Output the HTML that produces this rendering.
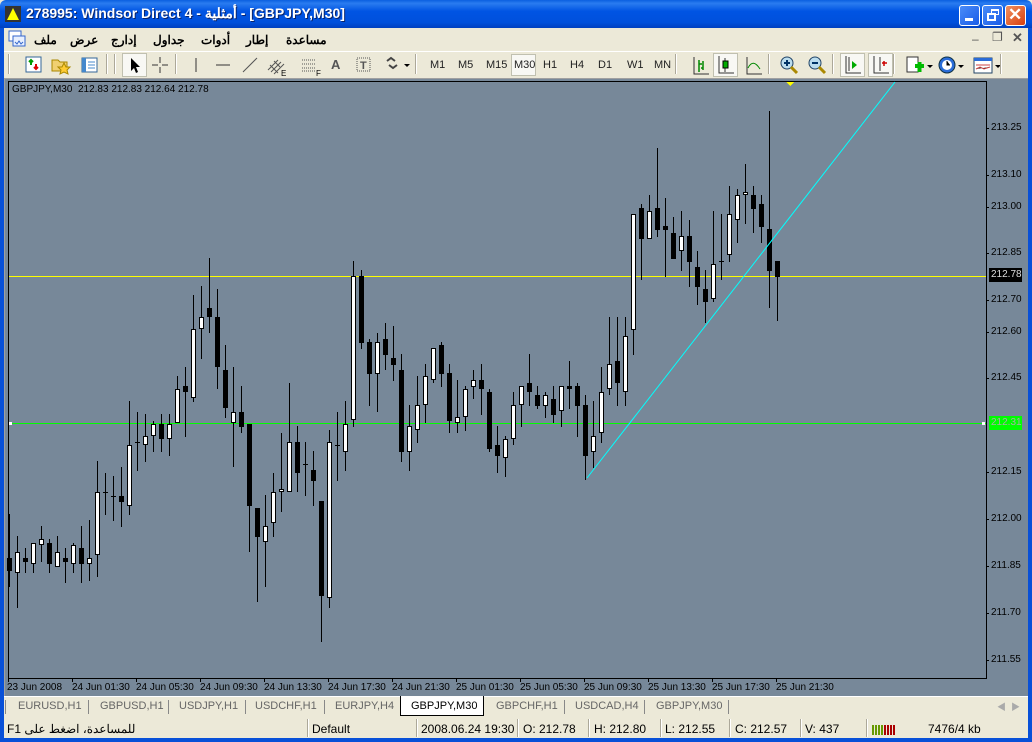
<!DOCTYPE html>
<html><head><meta charset="utf-8">
<style>
*{margin:0;padding:0;box-sizing:border-box}
body{width:1032px;height:742px;overflow:hidden;background:#ece9d8;font-family:"Liberation Sans","Noto Sans CJK SC",sans-serif;font-size:11px;color:#000;position:relative}
.abs{position:absolute}
#title{left:0;top:0;width:1032px;height:28px;background:linear-gradient(#0a5fe0 0%,#2a7cf0 12%,#0054e3 40%,#0050dc 80%,#0040c0 100%);border-radius:6px 6px 0 0}
#title .t{left:26px;top:5px;color:#fff;font-weight:bold;font-size:14px;text-shadow:1px 1px #0a246a;white-space:nowrap}
.wb{top:5px;width:21px;height:21px;border:1px solid #fff;border-radius:3px;background:linear-gradient(135deg,#4a8cf8,#1a5ce8)}
#lframe{left:0;top:28px;width:4px;height:714px;background:#0850d8}
#rframe{right:0;top:28px;width:4px;height:714px;background:#0850d8}
#bframe{left:0;top:738px;width:1032px;height:4px;background:#0850d8}
#menu{left:4px;top:28px;width:1024px;height:22px}
.m{top:5px;font-size:12px;font-weight:bold}
#tb{left:4px;top:51px;width:1024px;height:27px;border-top:1px solid #fff}
.tf{top:7px;font-size:11px;color:#222}
.sep{width:2px;height:20px;border-left:1px solid #aca899;border-right:1px solid #fff;top:54px}
#chart{left:4px;top:78px;width:1024px;height:618px;background:#778899;border-top:1px solid #a0a0a0;border-left:1px solid #a0a0a0}
.pl{left:991px;font-size:10px;font-family:"Liberation Sans",sans-serif;color:#000}
.dl{top:682px;font-size:10px;font-family:"Liberation Sans",sans-serif;white-space:nowrap}
#tabs{left:4px;top:696px;width:1024px;height:21px;background:#ece9d8;border-top:1px solid #fff}
.tab{top:700px;color:#666;font-size:11px;white-space:nowrap}
.ts{top:700px;width:1px;height:14px;background:#888}
#status{left:4px;top:718px;width:1024px;height:20px;background:#ece9d8}
.st{top:722px;font-size:12px;white-space:nowrap}
.ss{top:719px;width:2px;height:18px;border-left:1px solid #aca899;border-right:1px solid #fff}
</style></head><body>
<div id="title" class="abs">
 <svg class="abs" style="left:5px;top:6px" width="16" height="16"><rect width="16" height="16" fill="#333"/><polygon points="8,2 14,14 2,14" fill="#ff0"/></svg>
 <div class="abs t">278995: Windsor Direct 4 - أمثلية - [GBPJPY,M30]</div>
 <div class="abs wb" style="left:959px"><div class="abs" style="left:5px;top:12px;width:8px;height:3px;background:#fff"></div></div>
 <div class="abs wb" style="left:982px"><div class="abs" style="left:4px;top:7px;width:9px;height:8px;border:2px solid #fff"></div><div class="abs" style="left:8px;top:3px;width:8px;height:6px;border:1px solid #fff;border-top-width:2px"></div></div>
 <div class="abs wb" style="left:1005px;background:linear-gradient(135deg,#f09060,#d84010)"><div class="abs" style="left:2px;top:-1px;color:#fff;font-size:17px;font-weight:bold">✕</div></div>
</div>
<div id="lframe" class="abs"></div><div id="rframe" class="abs"></div>
<div id="menu" class="abs">
 <svg class="abs" style="left:4px;top:2px" width="18" height="18"><rect x="1" y="1" width="12" height="10" fill="#fff" stroke="#36c"/><rect x="5" y="6" width="12" height="10" fill="#e8f0ff" stroke="#36c"/><path d="M7 12l2 2 2-3 2 3 2-2" stroke="#36c" fill="none"/></svg>
 <div class="abs m" style="left:30px">ملف</div>
 <div class="abs m" style="left:66px">عرض</div>
 <div class="abs m" style="left:107px">إدارج</div>
 <div class="abs m" style="left:149px">جداول</div>
 <div class="abs m" style="left:197px">أدوات</div>
 <div class="abs m" style="left:242px">إطار</div>
 <div class="abs m" style="left:282px">مساعدة</div>
 <div class="abs" style="left:968px;top:4px;font-size:12px;color:#555">–</div>
 <div class="abs" style="left:988px;top:2px;font-size:12px;color:#555">❐</div>
 <div class="abs" style="left:1008px;top:2px;font-size:13px;color:#555;font-weight:bold">✕</div>
</div>
<div id="tb" class="abs">
 <svg class="abs" style="left:20px;top:3px" width="20" height="20"><rect x="2" y="2" width="15" height="15" fill="#fff" stroke="#369"/><path d="M7 5v5M5 7l2-2 2 2" stroke="#090" stroke-width="2" fill="none"/><path d="M12 9v5M10 12l2 2 2-2" stroke="#d00" stroke-width="2" fill="none"/></svg>
 <svg class="abs" style="left:46px;top:3px" width="22" height="20"><path d="M2 5h6l2 2h7v9H2z" fill="#f0d070" stroke="#a80"/><polygon points="14,8 16,12 20,12 17,15 18,19 14,17 10,19 11,15 8,12 12,12" fill="#fc3" stroke="#a80"/></svg>
 <svg class="abs" style="left:76px;top:3px" width="20" height="20"><rect x="2" y="3" width="15" height="14" fill="#fff" stroke="#369"/><rect x="2" y="3" width="4" height="14" fill="#48c"/><path d="M8 7h7M8 10h7M8 13h7" stroke="#48c"/></svg>
 <div class="abs" style="left:118px;top:1px;width:25px;height:24px;background:#f8f8f4;border:1px solid #c0c0b0"></div>
 <svg class="abs" style="left:122px;top:4px" width="18" height="18"><path d="M5 2v13l3-3 2 5 2-1-2-5h4z" fill="#000"/></svg>
 <svg class="abs" style="left:147px;top:4px" width="18" height="18"><path d="M9 1v6M9 11v6M1 9h6M11 9h6" stroke="#333"/></svg>
 <svg class="abs" style="left:183px;top:4px" width="18" height="18"><path d="M9 2v14" stroke="#333"/></svg>
 <svg class="abs" style="left:210px;top:4px" width="18" height="18"><path d="M2 9h14" stroke="#333"/></svg>
 <svg class="abs" style="left:237px;top:4px" width="18" height="18"><path d="M2 16L16 2" stroke="#555"/></svg>
 <svg class="abs" style="left:262px;top:4px" width="22" height="20"><path d="M2 14L12 4M5 16L15 6M8 18L18 8M4 9l8 8M8 5l6 6" stroke="#555"/><text x="15" y="20" font-size="8" font-family="Liberation Sans">E</text></svg>
 <svg class="abs" style="left:296px;top:4px" width="22" height="20"><path d="M2 4h14M2 8h14M2 12h14M2 15h14" stroke="#555" stroke-dasharray="1 1"/><text x="16" y="20" font-size="8" font-family="Liberation Sans">F</text></svg>
 <div class="abs" style="left:327px;top:5px;font-size:13px;font-weight:bold;color:#555">A</div>
 <svg class="abs" style="left:351px;top:4px" width="18" height="18"><rect x="2" y="2" width="13" height="13" fill="none" stroke="#555" stroke-dasharray="1 1"/><text x="5" y="13" font-size="11" font-weight="bold" fill="#555" font-family="Liberation Sans">T</text></svg>
 <svg class="abs" style="left:380px;top:4px" width="28" height="18"><path d="M3 5l4-3 4 3M5 9l4 3 4-3" stroke="#444" stroke-width="2" fill="none"/><path d="M20 8h6l-3 3z" fill="#000"/></svg>
 <div class="abs tf" style="left:426px">M1</div>
 <div class="abs tf" style="left:454px">M5</div>
 <div class="abs tf" style="left:482px">M15</div>
 <div class="abs" style="left:507px;top:2px;width:25px;height:22px;background:#f8f8f4;border:1px solid #c0c0b0"></div>
 <div class="abs tf" style="left:510px">M30</div>
 <div class="abs tf" style="left:539px">H1</div>
 <div class="abs tf" style="left:566px">H4</div>
 <div class="abs tf" style="left:594px">D1</div>
 <div class="abs tf" style="left:623px">W1</div>
 <div class="abs tf" style="left:650px">MN</div>
 <svg class="abs" style="left:686px;top:4px" width="20" height="20"><path d="M4 1v17h15M4 18" stroke="#333" fill="none"/><path d="M9 4v12M9 8h3M13 5v9M11 12h2" stroke="#080" stroke-width="1.5"/></svg>
 <div class="abs" style="left:709px;top:1px;width:25px;height:24px;background:#f8f8f4;border:1px solid #c0c0b0"></div>
 <svg class="abs" style="left:712px;top:3px" width="20" height="20"><path d="M3 1v17h15" stroke="#333" fill="none"/><path d="M9 3v14" stroke="#333"/><rect x="7" y="6" width="5" height="7" fill="#0a0" stroke="#000"/></svg>
 <svg class="abs" style="left:739px;top:4px" width="20" height="20"><path d="M4 1v17h15" stroke="#333" fill="none"/><path d="M5 12Q10 2 17 13" stroke="#080" fill="none"/></svg>
 <svg class="abs" style="left:775px;top:3px" width="22" height="22"><circle cx="8" cy="8" r="6" fill="#bde" stroke="#246"/><path d="M5 8h6M8 5v6" stroke="#036" stroke-width="2"/><path d="M12 12l6 6" stroke="#a80" stroke-width="3"/></svg>
 <svg class="abs" style="left:803px;top:3px" width="22" height="22"><circle cx="8" cy="8" r="6" fill="#bde" stroke="#246"/><path d="M5 8h6" stroke="#036" stroke-width="2"/><path d="M12 12l6 6" stroke="#a80" stroke-width="3"/></svg>
 <div class="abs" style="left:836px;top:1px;width:25px;height:24px;background:#f8f8f4;border:1px solid #c0c0b0"></div>
 <svg class="abs" style="left:839px;top:3px" width="20" height="20"><path d="M3 1v17h15" stroke="#333" fill="none"/><path d="M6 2v14" stroke="#333"/><path d="M9 6l5 4-5 4z" fill="#0a0"/></svg>
 <div class="abs" style="left:864px;top:1px;width:25px;height:24px;background:#f8f8f4;border:1px solid #c0c0b0"></div>
 <svg class="abs" style="left:867px;top:3px" width="20" height="20"><path d="M3 1v17h15" stroke="#333" fill="none"/><path d="M9 2v14" stroke="#333"/><path d="M11 8h5M13 6v5" stroke="#c00" stroke-width="1.5"/></svg>
 <svg class="abs" style="left:901px;top:3px" width="30" height="22"><rect x="2" y="2" width="11" height="15" fill="#fff" stroke="#333"/><path d="M10 11h9M14.5 7v10" stroke="#0b0" stroke-width="4"/><path d="M22 10h6l-3 3z" fill="#000"/></svg>
 <svg class="abs" style="left:933px;top:3px" width="30" height="22"><circle cx="10" cy="10" r="8" fill="#2a6cd8" stroke="#134"/><circle cx="10" cy="10" r="5" fill="#fff"/><path d="M10 6v4h3" stroke="#000"/><path d="M21 10h6l-3 3z" fill="#000"/></svg>
 <svg class="abs" style="left:968px;top:3px" width="30" height="22"><rect x="2" y="3" width="18" height="15" fill="#fff" stroke="#246"/><rect x="2" y="3" width="18" height="3" fill="#2a6cd8"/><path d="M4 10h14M4 14l4-2 4 2 6-2" stroke="#c44"/><path d="M23 10h6l-3 3z" fill="#000"/></svg>
</div>
<div class="abs sep" style="left:8px"></div><div class="abs sep" style="left:106px"></div><div class="abs sep" style="left:114px"></div><div class="abs sep" style="left:175px"></div><div class="abs sep" style="left:415px"></div><div class="abs sep" style="left:675px"></div><div class="abs sep" style="left:768px"></div><div class="abs sep" style="left:832px"></div><div class="abs sep" style="left:893px"></div><div class="abs sep" style="left:1000px"></div>

<div id="chart" class="abs"></div>
<svg class="abs" style="left:0;top:0" width="1032" height="742" shape-rendering="crispEdges" id="cs">
 <rect x="8.5" y="81.5" width="978" height="597" fill="none" stroke="#000"/>
 <line x1="9" y1="276.5" x2="986" y2="276.5" stroke="#ff0"/>
 <line x1="9" y1="423.5" x2="986" y2="423.5" stroke="#0f0"/>
 <rect x="9" y="422" width="3" height="3" fill="#fff"/>
 <rect x="982" y="422" width="3" height="3" fill="#fff"/>
 <polygon points="786,82 794,82 790,86" fill="#ff0"/>
 <g id="candles"></g>
 <line x1="587" y1="478" x2="895" y2="82" stroke="#0ff" shape-rendering="auto"/>
 <g stroke="#000">
  <path d="M986 128.5h3M986 175.5h3M986 207.5h3M986 253.5h3M986 300.5h3M986 332.5h3M986 378.5h3M986 472.5h3M986 519.5h3M986 566.5h3M986 613.5h3M986 660.5h3"/>
  <path d="M8.5 678v4M72.5 678v4M136.5 678v4M200.5 678v4M264.5 678v4M328.5 678v4M392.5 678v4M456.5 678v4M520.5 678v4M584.5 678v4M648.5 678v4M712.5 678v4M776.5 678v4"/>
 </g>
 <rect x="989" y="268" width="33" height="14" fill="#000"/>
 <rect x="989" y="416" width="33" height="14" fill="#0f0"/>
</svg>
<div class="abs" style="left:12px;top:84px;font-size:10px;font-family:'Liberation Sans',sans-serif;white-space:nowrap">GBPJPY,M30&nbsp; 212.83 212.83 212.64 212.78</div>
<div class="abs pl" style="top:122px">213.25</div>
<div class="abs pl" style="top:169px">213.10</div>
<div class="abs pl" style="top:201px">213.00</div>
<div class="abs pl" style="top:247px">212.85</div>
<div class="abs pl" style="top:269px;color:#ddd">212.78</div>
<div class="abs pl" style="top:294px">212.70</div>
<div class="abs pl" style="top:326px">212.60</div>
<div class="abs pl" style="top:372px">212.45</div>
<div class="abs pl" style="top:417px;color:#aaa">212.31</div>
<div class="abs pl" style="top:466px">212.15</div>
<div class="abs pl" style="top:513px">212.00</div>
<div class="abs pl" style="top:560px">211.85</div>
<div class="abs pl" style="top:607px">211.70</div>
<div class="abs pl" style="top:654px">211.55</div>
<div class="abs dl" style="left:7px">23 Jun 2008</div>
<div class="abs dl" style="left:72px">24 Jun 01:30</div>
<div class="abs dl" style="left:136px">24 Jun 05:30</div>
<div class="abs dl" style="left:200px">24 Jun 09:30</div>
<div class="abs dl" style="left:264px">24 Jun 13:30</div>
<div class="abs dl" style="left:328px">24 Jun 17:30</div>
<div class="abs dl" style="left:392px">24 Jun 21:30</div>
<div class="abs dl" style="left:456px">25 Jun 01:30</div>
<div class="abs dl" style="left:520px">25 Jun 05:30</div>
<div class="abs dl" style="left:584px">25 Jun 09:30</div>
<div class="abs dl" style="left:648px">25 Jun 13:30</div>
<div class="abs dl" style="left:712px">25 Jun 17:30</div>
<div class="abs dl" style="left:776px">25 Jun 21:30</div>

<div id="tabs" class="abs"></div>
<div class="abs ts" style="left:5px"></div>
<div class="abs tab" style="left:18px">EURUSD,H1</div><div class="abs ts" style="left:88px"></div>
<div class="abs tab" style="left:100px">GBPUSD,H1</div><div class="abs ts" style="left:168px"></div>
<div class="abs tab" style="left:179px">USDJPY,H1</div><div class="abs ts" style="left:245px"></div>
<div class="abs tab" style="left:255px">USDCHF,H1</div><div class="abs ts" style="left:324px"></div>
<div class="abs tab" style="left:335px">EURJPY,H4</div>
<div class="abs" style="left:400px;top:696px;width:84px;height:20px;background:#fff;border:1px solid #000;border-top:none"></div>
<div class="abs tab" style="left:411px;color:#000">GBPJPY,M30</div>
<div class="abs tab" style="left:496px">GBPCHF,H1</div><div class="abs ts" style="left:564px"></div>
<div class="abs tab" style="left:575px">USDCAD,H4</div><div class="abs ts" style="left:644px"></div>
<div class="abs tab" style="left:656px">GBPJPY,M30</div><div class="abs ts" style="left:728px"></div>
<div class="abs" style="left:997px;top:700px;font-size:9px;color:#aaa">◀&nbsp;&nbsp;▶</div>

<div id="status" class="abs"></div>
<div class="abs st" style="left:7px">F1 للمساعدة، اضغط على</div>
<div class="abs ss" style="left:307px"></div><div class="abs st" style="left:312px">Default</div>
<div class="abs ss" style="left:416px"></div><div class="abs st" style="left:421px">2008.06.24 19:30</div>
<div class="abs ss" style="left:517px"></div><div class="abs st" style="left:523px">O: 212.78</div>
<div class="abs ss" style="left:588px"></div><div class="abs st" style="left:594px">H: 212.80</div>
<div class="abs ss" style="left:660px"></div><div class="abs st" style="left:665px">L: 212.55</div>
<div class="abs ss" style="left:729px"></div><div class="abs st" style="left:735px">C: 212.57</div>
<div class="abs ss" style="left:800px"></div><div class="abs st" style="left:805px">V: 437</div>
<div class="abs ss" style="left:866px"></div>
<svg class="abs" style="left:872px;top:722px" width="26" height="13"><g stroke-width="2"><path d="M1 13V3M4 13V3M7 13V3M10 13V3" stroke="#690"/><path d="M13 13V3M16 13V3M19 13V3M22 13V3" stroke="#a00"/></g></svg>
<div class="abs st" style="left:928px">7476/4 kb</div>
<div id="bframe" class="abs"></div>
<script>
var D=[[514,587,558,571,'b'],[536,608,552,573,'w'],[548,573,558,562,'b'],[543,573,543,564,'w'],[526,562,539,545,'w'],[539,573,543,564,'b'],[536,567,552,567,'w'],[548,583,558,562,'b'],[543,573,545,564,'w'],[526,583,548,564,'b'],[520,581,558,564,'w'],[461,577,492,555,'w'],[473,515,492,492,'d'],[476,521,496,496,'d'],[467,527,496,502,'b'],[401,515,445,506,'w'],[412,471,442,442,'d'],[414,462,436,445,'w'],[421,452,424,436,'w'],[414,452,424,439,'b'],[414,456,424,439,'w'],[376,423,389,423,'w'],[367,437,386,392,'b'],[295,402,329,398,'w'],[286,359,317,329,'w'],[258,333,308,317,'b'],[289,389,317,367,'b'],[345,418,370,408,'b'],[367,467,412,423,'w'],[386,433,412,427,'b'],[424,552,424,506,'b'],[508,602,508,537,'b'],[495,587,526,542,'w'],[473,537,492,523,'w'],[433,512,489,492,'w'],[383,492,442,492,'w'],[426,492,442,473,'b'],[442,496,464,464,'d'],[451,506,470,481,'b'],[501,642,501,596,'b'],[430,608,442,598,'w'],[412,481,445,445,'d'],[401,471,424,452,'w'],[261,427,276,420,'w'],[270,349,276,343,'b'],[339,406,342,374,'b'],[333,412,342,374,'w'],[323,370,339,355,'b'],[326,381,358,365,'b'],[354,462,370,452,'b'],[405,471,426,452,'w'],[376,443,405,430,'w'],[364,423,376,405,'w'],[348,383,348,380,'w'],[342,387,345,374,'b'],[364,433,373,421,'b'],[380,433,417,423,'w'],[386,431,389,417,'w'],[370,399,380,387,'w'],[364,415,380,389,'b'],[389,452,392,449,'b'],[426,473,445,456,'b'],[436,477,439,458,'w'],[392,445,405,439,'w'],[386,427,386,405,'w'],[354,406,383,392,'b'],[386,409,395,406,'b'],[392,418,395,406,'w'],[386,423,399,415,'b'],[386,427,386,411,'w'],[361,409,386,389,'b'],[383,437,386,406,'b'],[395,480,405,456,'b'],[401,468,436,452,'w'],[367,443,392,433,'w'],[317,395,364,389,'w'],[317,406,361,383,'b'],[317,406,336,392,'w'],[214,355,214,330,'w'],[204,280,208,239,'b'],[195,239,211,239,'w'],[148,237,208,230,'b'],[198,277,226,230,'b'],[217,259,233,259,'b'],[211,271,236,251,'w'],[220,287,236,262,'b'],[251,305,267,287,'b'],[270,323,289,302,'b'],[211,302,264,299,'w'],[214,280,261,261,'d'],[186,262,214,255,'w'],[189,243,195,220,'w'],[164,224,192,195,'w'],[186,233,195,209,'b'],[195,243,204,227,'b'],[111,308,229,271,'b'],[261,321,261,277,'b']];
var s='';
D.forEach(function(c,i){var x=9+8*i;
s+='<rect x="'+x+'" y="'+c[0]+'" width="1" height="'+(c[1]-c[0])+'" fill="#000"/>';
if(c[4]=='d'){s+='<rect x="'+(x-2)+'" y="'+c[2]+'" width="5" height="1" fill="#000"/>';}
else{var h=Math.max(c[3]-c[2],3);s+='<rect x="'+(x-2)+'" y="'+c[2]+'" width="5" height="'+h+'" fill="#000"/>';
if(c[4]=='w')s+='<rect x="'+(x-1)+'" y="'+(c[2]+1)+'" width="3" height="'+(h-2)+'" fill="#fff"/>';}
});
document.getElementById('candles').innerHTML=s;
</script>
</body></html>
